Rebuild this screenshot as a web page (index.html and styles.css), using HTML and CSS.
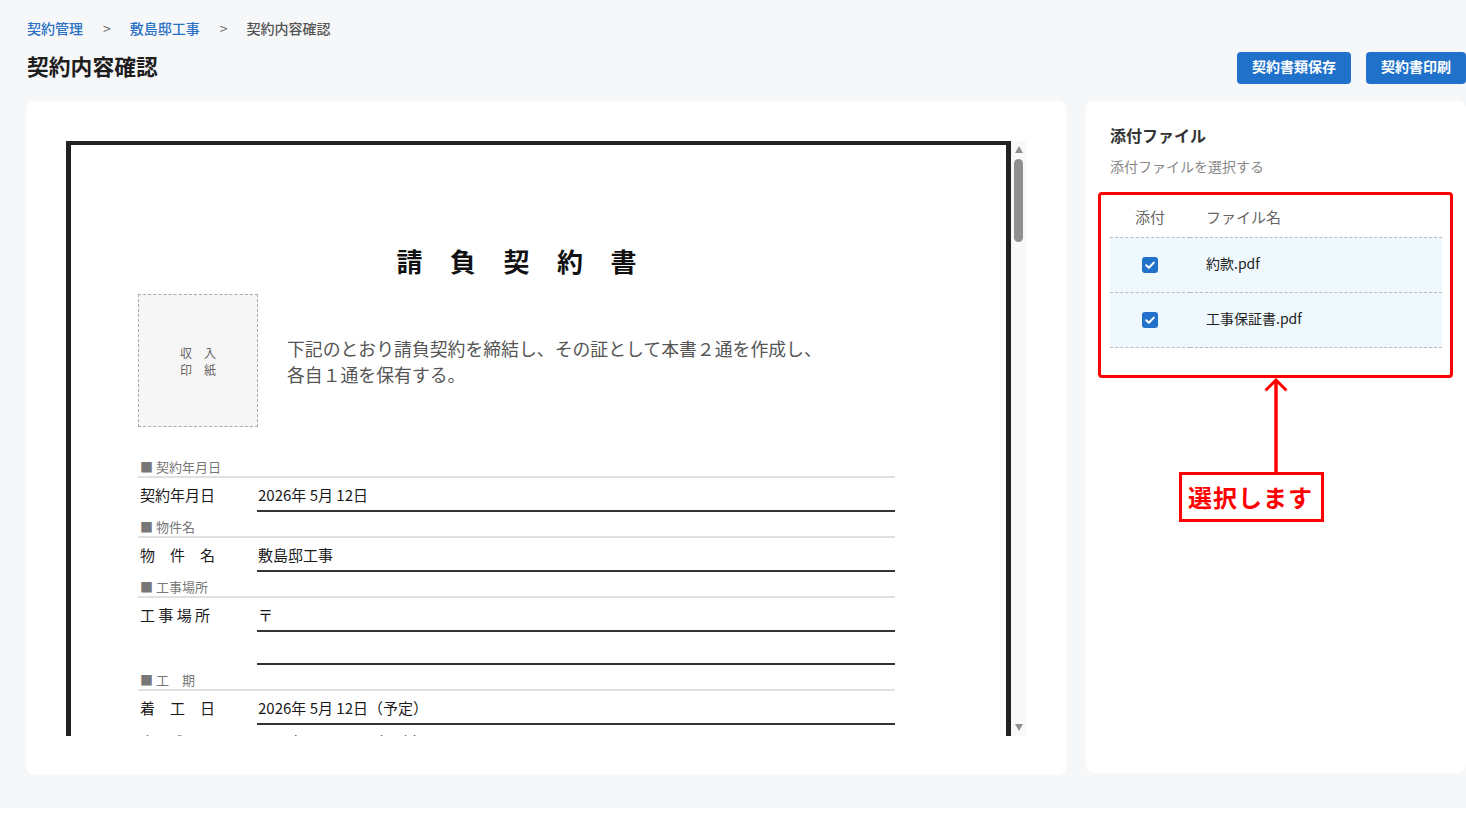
FILE: index.html
```html
<!DOCTYPE html>
<html lang="ja">
<head>
<meta charset="utf-8">
<title>契約内容確認</title>
<link rel="stylesheet" href="styles.css">
</head>
<body>
<div class="page">
  <nav class="crumbs">
    <a class="crumb-link">契約管理</a><span class="sep">&gt;</span><a class="crumb-link">敷島邸工事</a><span class="sep">&gt;</span><span class="crumb-current">契約内容確認</span>
  </nav>
  <header class="head">
    <h1 class="page-title">契約内容確認</h1>
    <div class="actions">
      <button class="btn">契約書類保存</button>
      <button class="btn">契約書印刷</button>
    </div>
  </header>
  <main class="layout">
    <section class="card doc-card">
      <div class="viewer">
        <div class="clip">
          <div class="paper">
            <div class="paper-body">
              <h2 class="doc-title"><span>請</span><span>負</span><span>契</span><span>約</span><span>書</span></h2>
              <div class="intro">
                <div class="stamp"><span>収　入</span><span>印　紙</span></div>
                <p class="intro-text">下記のとおり請負契約を締結し、その証として本書２通を作成し、<br>各自１通を保有する。</p>
              </div>
              <div class="sec">
                <div class="sec-title">■ 契約年月日</div>
                <div class="row"><div class="lbl">契約年月日</div><div class="val">2026年 5月 12日</div></div>
              </div>
              <div class="sec">
                <div class="sec-title">■ 物件名</div>
                <div class="row"><div class="lbl">物　件　名</div><div class="val">敷島邸工事</div></div>
              </div>
              <div class="sec">
                <div class="sec-title">■ 工事場所</div>
                <div class="row"><div class="lbl">工 事 場 所</div><div class="val">〒</div></div>
                <div class="row cont"><div class="lbl"></div><div class="val"></div></div>
              </div>
              <div class="sec">
                <div class="sec-title">■ 工　期</div>
                <div class="row"><div class="lbl">着　工　日</div><div class="val">2026年 5月 12日（予定）</div></div>
                <div class="row"><div class="lbl">完　成　日</div><div class="val">2026年 5月 12日（予定）</div></div>
              </div>
              <div class="sec">
                <div class="sec-title">■ 請負代金額</div>
                <div class="row"><div class="lbl">請負代金額</div><div class="val">￥</div></div>
              </div>
            </div>
          </div>
        </div>
        <div class="sbar">
          <span class="arr arr-up"></span>
          <span class="thumb"></span>
          <span class="arr arr-down"></span>
        </div>
      </div>
    </section>
    <aside class="card files">
      <h3 class="files-title">添付ファイル</h3>
      <p class="files-sub">添付ファイルを選択する</p>
      <table class="ftable">
        <thead>
          <tr><th class="c-check">添付</th><th class="c-name">ファイル名</th></tr>
        </thead>
        <tbody>
          <tr class="sel"><td class="c-check"><span class="cb"><svg viewBox="0 0 16 16" width="16" height="16"><path d="M4.2 8.3 L6.9 10.8 L11.8 5.6" fill="none" stroke="#fff" stroke-width="2" stroke-linecap="round" stroke-linejoin="round"/></svg></span></td><td class="c-name">約款.pdf</td></tr>
          <tr class="sel"><td class="c-check"><span class="cb"><svg viewBox="0 0 16 16" width="16" height="16"><path d="M4.2 8.3 L6.9 10.8 L11.8 5.6" fill="none" stroke="#fff" stroke-width="2" stroke-linecap="round" stroke-linejoin="round"/></svg></span></td><td class="c-name">工事保証書.pdf</td></tr>
        </tbody>
      </table>
      <div class="mark-box"></div>
      <svg class="mark-arrow" viewBox="0 0 28 97" width="28" height="97">
        <line x1="14" y1="2" x2="14" y2="97" stroke="#ff0000" stroke-width="3.5"/>
        <polyline points="3.5,12.5 14,2 24.5,12.5" fill="none" stroke="#ff0000" stroke-width="3"/>
      </svg>
      <div class="mark-label">選択します</div>
    </aside>
  </main>
</div>
</body>
</html>
```

FILE: styles.css
```css
html, body {
  margin: 0;
  padding: 0;
  background: #ffffff;
}
body {
  font-family: "Noto Sans CJK JP", "Noto Sans", sans-serif;
  color: #222;
  overflow: hidden;
}
.page {
  background: #f6f7f9;
  padding: 18px 0 33px 26px;
}
.crumbs {
  display: flex;
  align-items: center;
  font-size: 14px;
  line-height: 20px;
  height: 20px;
  font-weight: 500;
  padding-left: 1px;
}
.crumb-link {
  color: #2a70c4;
}
.sep {
  color: #666;
  font-weight: 400;
  padding: 0 19px 0 20px;
}
.crumb-current {
  color: #555;
}
.head {
  display: flex;
  align-items: center;
  justify-content: space-between;
  margin-top: 14px;
  height: 32px;
}
.page-title {
  margin: 0;
  padding: 0 0 5px 1px;
  font-size: 21.8px;
  font-weight: 700;
  line-height: 30px;
  color: #1e1e1e;
}
.actions {
  display: flex;
  gap: 15px;
}
.btn {
  height: 32px;
  padding: 0 15px 3px;
  border: none;
  border-radius: 4px;
  background: #1f71c9;
  color: #fff;
  font-family: inherit;
  font-size: 14px;
  font-weight: 700;
  line-height: 29px;
}
.layout {
  display: grid;
  grid-template-columns: 1fr 380px;
  gap: 20px;
  align-items: start;
  margin-top: 17px;
}
.card {
  background: #fff;
  border-radius: 8px;
}
.doc-card {
  padding: 40px 40px 39px 40px;
}
.viewer {
  display: flex;
  height: 595px;
}
.clip {
  flex: 1;
  overflow: hidden;
}
.paper {
  border: 5px solid #222;
  border-top-width: 4px;
  padding: 98px 0 120px 67px;
}
.paper-body {
  width: 757px;
}
.doc-title {
  margin: 0 0 16px;
  display: flex;
  justify-content: center;
  gap: 27.5px;
  font-size: 26px;
  line-height: 35px;
  font-weight: 700;
  color: #111;
}
.intro {
  display: flex;
  align-items: center;
  gap: 29px;
}
.stamp {
  width: 120px;
  height: 133px;
  box-sizing: border-box;
  border: 1px dashed #aaa;
  background: #f6f6f6;
  display: flex;
  flex-direction: column;
  align-items: center;
  justify-content: center;
  font-size: 12px;
  line-height: 17px;
  color: #666;
}
.intro-text {
  margin: 0;
  font-size: 17.85px;
  line-height: 26px;
  color: #555;
}
.sec {
  margin-top: 6px;
}
.intro + .sec {
  margin-top: 31px;
}
.sec-title {
  font-size: 13px;
  line-height: 17px;
  padding-bottom: 1px;
  color: #777;
  padding-left: 2px;
  border-bottom: 2px solid #e0e0e0;
}
.row {
  display: grid;
  grid-template-columns: 119px 1fr;
}
.lbl {
  font-size: 15px;
  line-height: 21px;
  padding: 6px 0 5px 2px;
  color: #1a1a1a;
}
.val {
  font-size: 15px;
  line-height: 21px;
  padding: 6px 0 5px 1px;
  border-bottom: 2px solid #333;
  color: #1a1a1a;
}
.row.cont .lbl,
.row.cont .val {
  padding: 0;
  height: 31px;
}
.sbar {
  width: 15px;
  background: #f8f8f8;
  display: flex;
  flex-direction: column;
  align-items: center;
}
.arr {
  width: 0;
  height: 0;
  border-left: 4.5px solid transparent;
  border-right: 4.5px solid transparent;
}
.arr-up {
  margin-top: 5px;
  border-bottom: 7px solid #8f8f8f;
}
.arr-down {
  margin-top: auto;
  margin-bottom: 5px;
  border-top: 7px solid #8f8f8f;
}
.thumb {
  margin-top: 6px;
  width: 9px;
  height: 83px;
  border-radius: 5px;
  background: #8f8f8f;
}
.files {
  position: relative;
  height: 672px;
  box-sizing: border-box;
  padding: 23px 24px;
}
.files-title {
  margin: 0;
  font-size: 16px;
  line-height: 22px;
  font-weight: 700;
  color: #333;
}
.files-sub {
  margin: 10px 0 0;
  font-size: 14px;
  line-height: 20px;
  color: #888;
}
.ftable {
  margin-top: 20px;
  width: 100%;
  border-collapse: collapse;
}
.ftable th {
  height: 40px;
  padding: 0 0 1px;
  font-size: 15px;
  font-weight: 400;
  color: #666;
  border-bottom: 1px dashed #bbb;
  text-align: left;
}
.ftable td {
  height: 50px;
  padding: 0 0 4px;
  font-size: 14px;
  color: #222;
  border-bottom: 1px dashed #bbb;
}
.ftable tr.sel td {
  background: #eff8fd;
}
.ftable .c-check {
  width: 80px;
  text-align: center;
}
.ftable .c-name {
  padding-left: 16px;
}
.cb {
  display: inline-block;
  width: 16px;
  height: 16px;
  border-radius: 3px;
  background: #2272cc;
  vertical-align: middle;
}
.cb svg {
  display: block;
}
.mark-box {
  position: absolute;
  left: 12px;
  top: 91px;
  width: 355px;
  height: 186px;
  box-sizing: border-box;
  border: 3px solid #ff0000;
  border-radius: 4px;
  pointer-events: none;
}
.mark-arrow {
  position: absolute;
  left: 176px;
  top: 277px;
}
.mark-label {
  position: absolute;
  left: 93px;
  top: 371px;
  height: 50px;
  box-sizing: border-box;
  border: 3px solid #ff0000;
  background: #fff;
  padding: 0 8px 0 6px;
  font-size: 24px;
  font-weight: 700;
  line-height: 44px;
  letter-spacing: 1px;
  color: #ff0000;
}
```
